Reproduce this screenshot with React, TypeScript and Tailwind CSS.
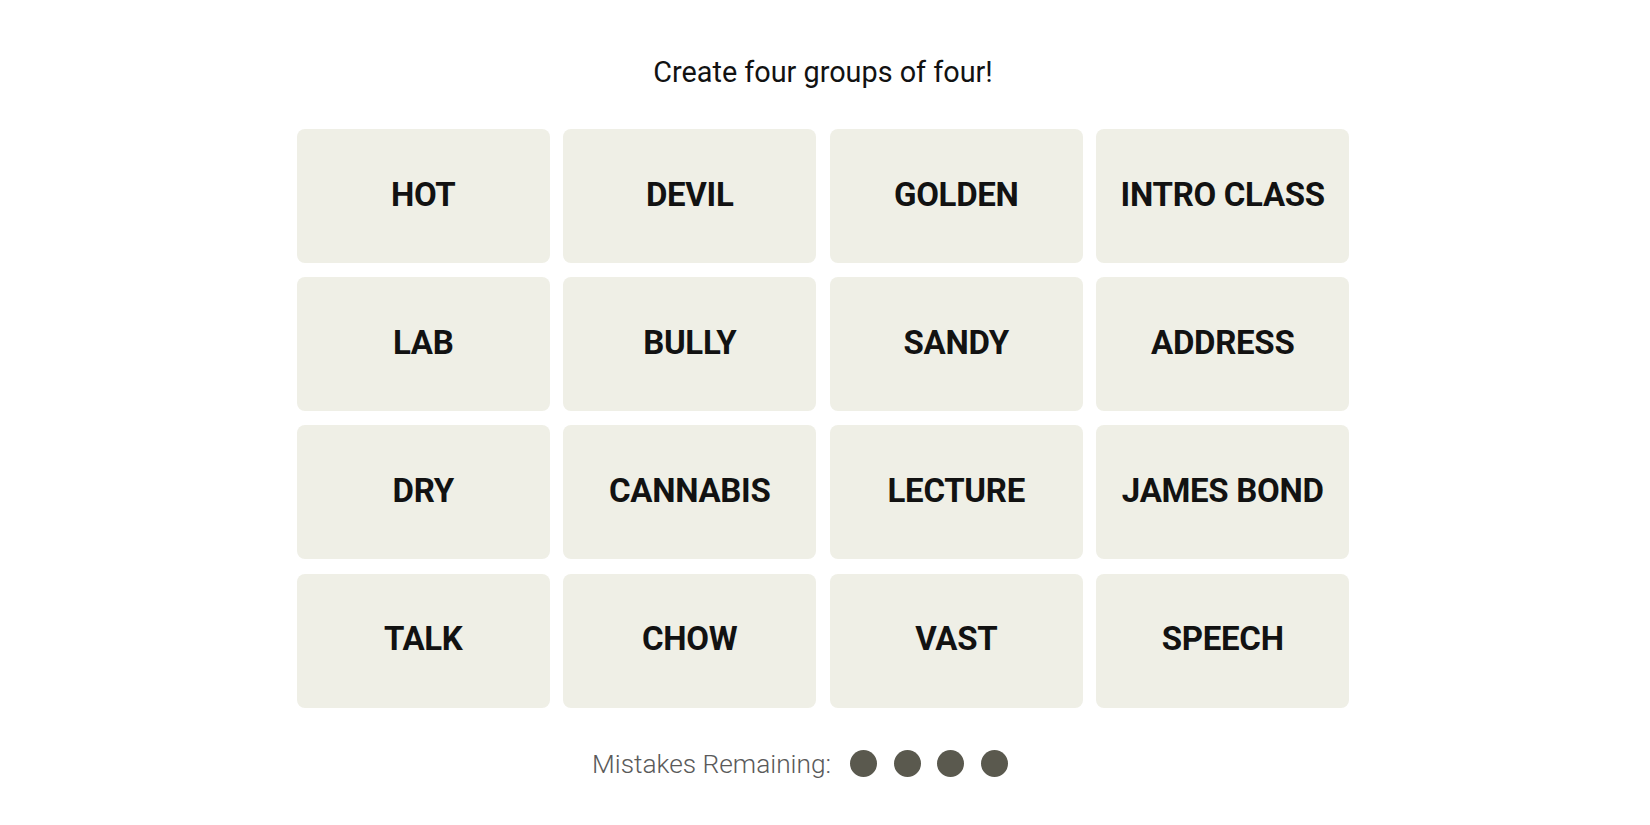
import React from "react";

const words = [
  "HOT", "DEVIL", "GOLDEN", "INTRO CLASS",
  "LAB", "BULLY", "SANDY", "ADDRESS",
  "DRY", "CANNABIS", "LECTURE", "JAMES BOND",
  "TALK", "CHOW", "VAST", "SPEECH",
];

export default function App() {
  return (
    <div
      className="min-h-screen w-full bg-white flex flex-col items-center pr-[4px]"
      style={{ fontFamily: 'Roboto, "Liberation Sans", sans-serif' }}
    >
      <p className="mt-[53px] text-[28.8px] leading-[38px] text-[#121212]">
        Create four groups of four!
      </p>
      <div className="mt-[38px] grid grid-cols-[repeat(4,253px)] auto-rows-[134px] gap-x-[13.5px] gap-y-[14.2px]">
        {words.map((w) => (
          <div
            key={w}
            className="flex items-center justify-center pb-[3px] rounded-[8px] bg-[#efefe6] text-[33px] font-bold text-[#121212] tracking-[-0.3px]"
          >
            {w}
          </div>
        ))}
      </div>
      <div className="w-[1052px] mt-[38px] pl-[295px] flex items-center">
        <span className="text-[26.3px] leading-[36px] text-[#5a5a5a] font-light">
          Mistakes Remaining:
        </span>
        <div className="ml-[19px] flex items-center gap-[16.5px]">
          {[0, 1, 2, 3].map((i) => (
            <span key={i} className="block w-[27px] h-[27px] rounded-full bg-[#5a594e]" />
          ))}
        </div>
      </div>
    </div>
  );
}
